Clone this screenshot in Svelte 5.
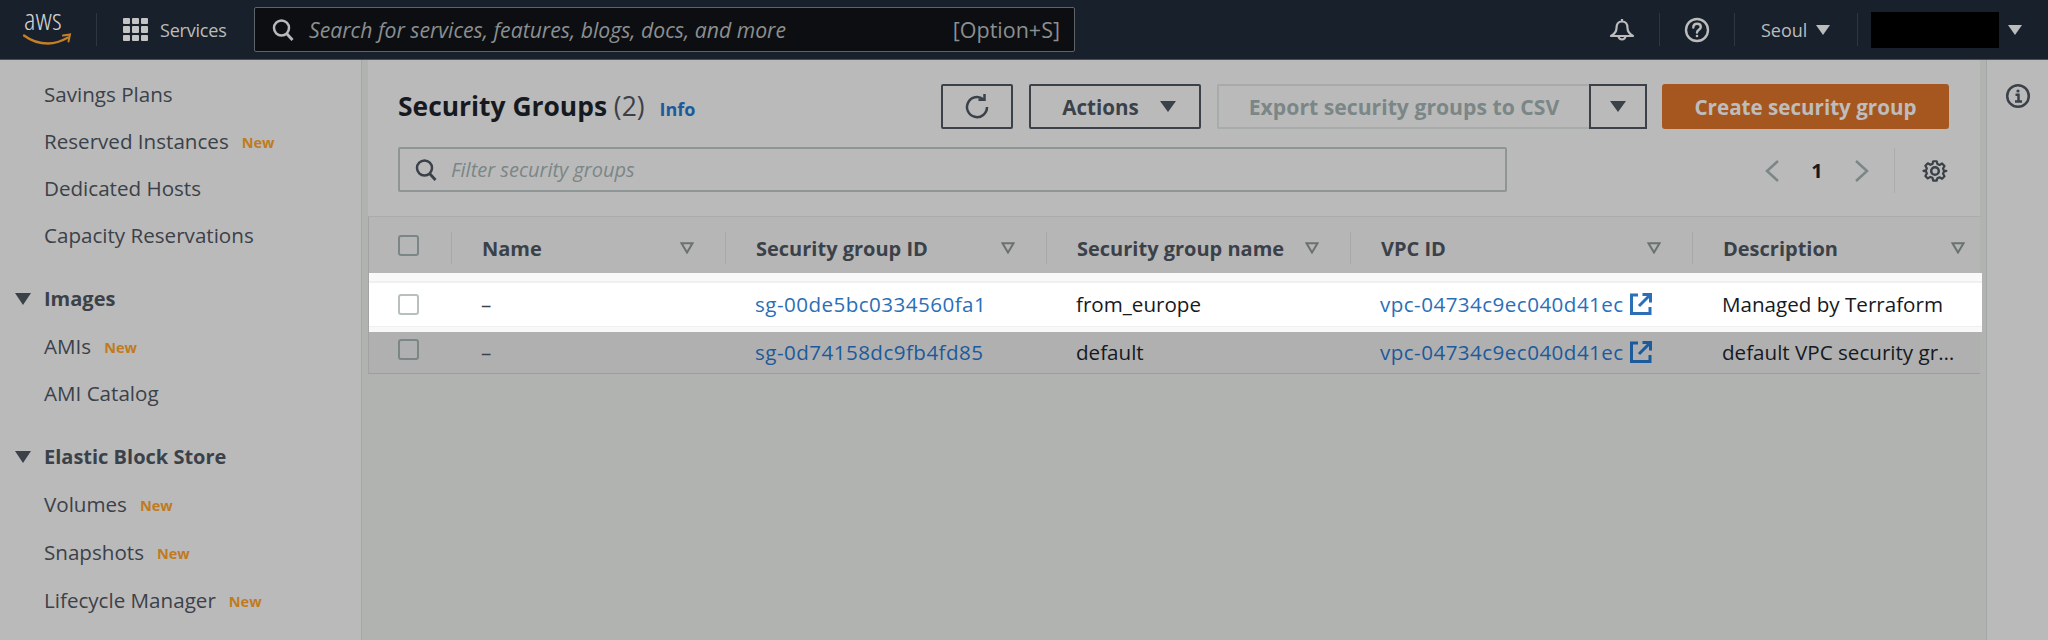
<script>
  const groups = [
    { items: [{ t: 'Savings Plans' }, { t: 'Reserved Instances', n: 1 }, { t: 'Dedicated Hosts' }, { t: 'Capacity Reservations' }] },
    { head: 'Images', items: [{ t: 'AMIs', n: 1 }, { t: 'AMI Catalog' }] },
    { head: 'Elastic Block Store', items: [{ t: 'Volumes', n: 1 }, { t: 'Snapshots', n: 1 }, { t: 'Lifecycle Manager', n: 1 }] }
  ];
  const cols = ['Name', 'Security group ID', 'Security group name', 'VPC ID', 'Description'];
  const rows = [
    { id: 'sg-00de5bc0334560fa1', name: 'from_europe', desc: 'Managed by Terraform', hi: true },
    { id: 'sg-0d74158dc9fb4fd85', name: 'default', desc: 'default VPC security group', hi: false }
  ];
</script>

<div class="page">
  <header class="top">
    <div class="logo">
      <span class="aws">aws</span>
      <svg class="smile" width="50" height="14" viewBox="0 0 50 14"><path d="M1 2.500C9 8.500 17 10.500 25 10.500c7 0 13-2 20-6" fill="none" stroke="#c67f24" stroke-width="2.400" stroke-linecap="round"/><path d="M40 2.500l7-1-1.500 7" fill="none" stroke="#c67f24" stroke-width="2" stroke-linecap="round"/></svg>
    </div>
    <span class="nsep s1"></span>
    <div class="dots">{#each Array(9) as _}<i></i>{/each}</div>
    <span class="services">Services</span>
    <div class="search">
      <svg width="22" height="24" viewBox="0 0 22 24"><circle cx="9.500" cy="10" r="7.500" fill="none" stroke="#b9b9b9" stroke-width="2.500"/><path d="M15 16l5.500 6" stroke="#b9b9b9" stroke-width="2.800"/></svg>
      <span class="ph">Search for services, features, blogs, docs, and more</span>
      <span class="kbd">[Option+S]</span>
    </div>
    <div class="right">
      <svg class="bell" width="26" height="26" viewBox="0 0 26 26" fill="none" stroke="#bcbcbc" stroke-width="2.200"><path d="M13 2v2.500M13 4.500c-4 0-5.500 3-5.500 6.500 0 4-2 6-5.500 8h22c-3.500-2-5.500-4-5.500-8 0-3.500-1.500-6.500-5.500-6.500z" stroke-linejoin="round"/><path d="M9.500 19a3.500 3.500 0 0 0 7 0"/></svg>
      <span class="nsep"></span>
      <svg class="help" width="26" height="26" viewBox="0 0 26 26" fill="none" stroke="#bcbcbc" stroke-width="2.400"><circle cx="13" cy="13" r="11"/><path d="M9.300 10.500c0-2.300 1.700-3.700 3.800-3.700s3.700 1.300 3.700 3.200c0 2.700-3.800 2.800-3.800 5.500" stroke-linecap="round"/><circle cx="13" cy="19" r="1.300" fill="#bcbcbc" stroke="none"/></svg>
      <span class="nsep"></span>
      <span class="seoul">Seoul</span>
      <span class="tri light t-seoul"></span>
      <span class="nsep"></span>
      <span class="black"></span>
      <span class="tri light t-user"></span>
    </div>
  </header>

  <div class="body">
    <aside class="side">
      {#each groups as g}
        <section class="group">
          {#if g.head}
            <div class="head"><span class="tri dark"></span><span>{g.head}</span></div>
          {/if}
          {#each g.items as it}
            <div class="item">{it.t}{#if it.n}<span class="new">New</span>{/if}</div>
          {/each}
        </section>
      {/each}
    </aside>

    <main class="main">
      <div class="panel">
        <div class="bar1">
          <h1>Security Groups <span class="count">(2)</span></h1>
          <span class="info">Info</span>
          <div class="actions">
            <button class="btn refresh" aria-label="Refresh">
              <svg width="26" height="26" viewBox="0 0 26 26" fill="none" stroke="#3b4149" stroke-width="2.500"><path d="M19.500 5.500A10 10 0 1 0 23 13"/><path d="M14.500 5.800h6V0"/></svg>
            </button>
            <button class="btn act">Actions<span class="tri dark big"></span></button>
            <div class="export">Export security groups to CSV</div>
            <button class="btn drop" aria-label="Export options"><span class="tri dark big"></span></button>
            <button class="create">Create security group</button>
          </div>
        </div>
        <div class="bar2">
          <div class="filter">
            <svg width="22" height="24" viewBox="0 0 22 24"><circle cx="9.500" cy="10" r="7.500" fill="none" stroke="#3b4149" stroke-width="2.500"/><path d="M15 16l5.500 6" stroke="#3b4149" stroke-width="2.800"/></svg>
            <span class="fph">Filter security groups</span>
          </div>
          <div class="pager">
            <svg width="16" height="24" viewBox="0 0 16 24" fill="none" stroke="#7b8686" stroke-width="2.500"><path d="M14 2L3 12l11 10"/></svg>
            <span class="pnum">1</span>
            <svg width="16" height="24" viewBox="0 0 16 24" fill="none" stroke="#7b8686" stroke-width="2.500"><path d="M2 2l11 10L2 22"/></svg>
            <span class="psep"></span>
            <svg width="26" height="26" viewBox="0 0 26 26" fill="none" stroke="#3b4149" stroke-width="2.500"><path d="M11 2h4l.8 3.200 2.400 1 2.900-1.700 2.800 2.800-1.700 2.900 1 2.400L26 13l-2.800.8-1 2.400 1.700 2.900-2.800 2.800-2.900-1.700-2.400 1L15 24h-4l-.8-3.200-2.400-1-2.900 1.700-2.800-2.800 1.700-2.900-1-2.400L0 13l2.800-.6 1-2.400-1.700-2.900 2.800-2.800 2.900 1.700 2.400-1z" transform="translate(1.500 1.500) scale(.88)" stroke-linejoin="round"/><circle cx="13" cy="13" r="3.800"/></svg>
          </div>
        </div>

        <div class="table">
          <div class="thead grid">
            <div class="cell cbc"><span class="cb"></span></div>
            {#each cols as c}
              <div class="cell th"><span>{c}</span>
                <svg class="sort" width="14" height="12" viewBox="0 0 14 12" fill="none" stroke="#69736f" stroke-width="2"><path d="M1.500 1.200h11L7 10.500z"/></svg>
              </div>
            {/each}
          </div>
          {#each rows as r}
            <div class="row grid" class:hi={r.hi}>
              <div class="cell cbc"><span class="cb"></span></div>
              <div class="cell td dash">–</div>
              <div class="cell td link">{r.id}</div>
              <div class="cell td">{r.name}</div>
              <div class="cell td link">vpc-04734c9ec040d41ec
                <svg class="ext" width="22" height="22" viewBox="0 0 22 22" fill="none" stroke="currentColor" stroke-width="3"><path d="M8 2H1.500v18.500H20V14"/><path d="M12.500 1.500h8v8M20 2L9 13"/></svg>
              </div>
              <div class="cell td desc"><span class="ell">{r.desc}</span></div>
            </div>
          {/each}
        </div>
      </div>
    </main>

    <aside class="tools">
      <svg width="26" height="26" viewBox="0 0 26 26" fill="none" stroke="#3b4149" stroke-width="2.500"><circle cx="13" cy="13" r="10.800"/><circle cx="13" cy="8" r="1.600" fill="#3b4149" stroke="none"/><path d="M10.500 11.800H13.500V18M10 18.500h7"/></svg>
    </aside>
  </div>
</div>

<style>
  :global(body) { margin: 0; background: #bababa; }
  .page {
    width: 2048px; height: 640px; overflow: hidden;
    font-family: "Open Sans", "Noto Sans", sans-serif;
    display: flex; flex-direction: column;
    color: #3b4149; background: #bababa;
  }
  .top {
    height: 59px; flex: none; display: flex; align-items: center;
    background: #18202b; border-bottom: 1px solid #4a4f55; color: #bcbcbc;
  }
  .logo { width: 52px; margin-left: 24px; height: 46px; position: relative; }
  .aws { position: absolute; left: 0; top: 0; font-size: 30px; line-height: 24px; font-stretch: 85%; font-weight: 300; color: #cfcfcf; white-space: nowrap; }
  .smile { position: absolute; left: -1px; top: 26px; }
  .nsep { width: 1px; height: 33px; background: #2e3640; flex: none; }
  .s1 { margin-left: 20px; }
  .dots { display: grid; grid-template-columns: repeat(3, 7px); gap: 2px; margin-left: 26px; }
  .dots i { width: 7px; height: 6.500px; background: #c4c4c4; border-radius: 1px; }
  .services { margin-left: 12px; font-size: 18px; width: 69px; white-space: nowrap; letter-spacing: -.2px; }
  .search {
    margin-left: 25px; height: 43px; flex: none;
    background: #0c0e12; border: 1px solid #5e6468; border-radius: 2px;
    display: flex; align-items: center; padding: 0 14px 0 17px; box-sizing: content-box; width: 788px;
  }
  .ph { margin-left: 15px; font-style: italic; font-size: 21.200px; color: #8b8f90; white-space: nowrap; }
  .kbd { margin-left: auto; font-size: 21.500px; color: #8b8f90; }
  .right { margin-left: auto; display: flex; align-items: center; }
  .bell { margin-right: 24px; }
  .help { margin: 0 24px; }
  .seoul { margin-left: 26px; font-size: 18px; width: 47px; }
  .tri { display: inline-block; width: 0; height: 0; border-style: solid; border-color: transparent; border-width: 10px 7px 0; }
  .tri.light { border-top-color: #bcbcbc; }
  .tri.dark { border-top-color: #3b4149; }
  .tri.big { border-width: 11px 8px 0; }
  .t-seoul { margin: 0 27px 0 8px; }
  .black { width: 128px; height: 36px; background: #000; margin-left: 13px; }
  .t-user { margin: 0 26px 0 9px; }

  .body { flex: 1; min-height: 0; display: flex; }
  .side { width: 362px; flex: none; box-sizing: border-box; padding-top: 10px; border-right: 1px solid #a5a7a6; }
  .group + .group { margin-top: 17px; }
  .head, .item { height: 47px; display: flex; align-items: center; white-space: nowrap; }
  .group:last-child .item { height: 48px; }
  .item { padding-left: 44px; font-size: 20.600px; }
  .head { font-weight: 700; font-size: 20px; }
  .head .tri { width: 0; margin: 0 13px 0 15px; border-width: 12px 8px 0; }
  .new { font-size: 14.500px; font-weight: 700; color: #c17a20; margin-left: 13px; margin-top: 3px; }

  .main { width: 1625px; flex: none; box-sizing: border-box; display: flex; background: #b1b3b1; border-right: 1px solid #a5a7a6; }
  .panel { width: 1612px; margin-left: 6px; flex: none; }
  .bar1 { height: 87px; padding: 24px 31px 0 30px; box-sizing: border-box; display: flex; align-items: flex-start; background: #bababa; }
  h1 { margin: 0; font-size: 26.400px; line-height: 45px; font-weight: 700; color: #16191f; white-space: nowrap; }
  .count { font-weight: 400; color: #3b4149; }
  .info { margin-left: 15px; font-size: 18px; font-weight: 700; color: #1c5a9c; line-height: 50px; }
  .actions { margin-left: auto; display: flex; }
  .btn { height: 45px; box-sizing: border-box; background: transparent; border: 2px solid #3b4149; border-radius: 2px; display: flex; align-items: center; justify-content: center; font: inherit; font-weight: 700; font-size: 20.600px; color: #3b4149; padding: 0; }
  .refresh { width: 72px; }
  .act { width: 172px; margin-left: 16px; gap: 21px; padding-left: 8px; }
  .export { width: 372px; height: 45px; margin-left: 16px; box-sizing: border-box; border: 2px solid #a7acab; border-right: 0; border-radius: 2px 0 0 2px; font-weight: 700; font-size: 21.200px; color: #7b8686; display: flex; align-items: center; justify-content: center; white-space: nowrap; }
  .drop { width: 58px; border-radius: 0; }
  .create { width: 287px; height: 45px; margin-left: 15px; border: 0; border-radius: 3px; background: #a65720; color: #bdbdbd; font: inherit; font-weight: 700; font-size: 20.600px; }
  .bar2 { height: 69px; padding-left: 30px; padding-right: 32px; display: flex; background: #bababa; box-sizing: border-box; }
  .filter { width: 1109px; height: 45px; box-sizing: border-box; border: 2px solid #8d9695; border-radius: 2px; display: flex; align-items: center; padding-left: 15px; flex: none; }
  .fph { margin-left: 14px; font-style: italic; font-size: 20px; color: #7b8686; }
  .pager { margin-left: auto; display: flex; align-items: center; height: 45px; margin-top: 1px; }
  .pnum { width: 78px; margin: 0 -2px; text-align: center; font-weight: 700; font-size: 20px; color: #16191f; }
  .psep { width: 1px; height: 45px; background: #a9adac; margin: 0 27px 0 24px; }
  .table { background: #b6b6b6; border-top: 1px solid #a9acab; border-bottom: 1px solid #9b9e9d; border-left: 1px solid #a0a3a2; }
  .grid { display: grid; grid-template-columns: 82px 274px 321px 304px 342px 288px; }
  .thead { height: 56px; align-items: center; background: #b6b6b6; }
  .cell { display: flex; align-items: center; box-sizing: border-box; min-width: 0; }
  .cbc { padding-left: 29px; }
  .cb { width: 21px; height: 21px; box-sizing: border-box; border: 2px solid #7b8686; border-radius: 3px; }
  .th { height: 32px; border-left: 1px solid #a6a9a8; padding-left: 30px; padding-right: 31px; font-size: 20px; font-weight: 700; justify-content: space-between; white-space: nowrap; margin-top: 6px; }
  .th:last-child { padding-right: 15px; }
  .row { height: 41px; align-items: center; background: #b0b0b0; color: #16191f; font-size: 20.600px; }
  .row .cb { margin-top: -6px; }
  .td { padding-left: 30px; white-space: nowrap; margin-top: -2px; }
  .hi { height: 59px; background: #fff; border-top: 8px solid #f9f9f9; border-bottom: 5px solid #f8f8f8; box-sizing: border-box; box-shadow: inset 0 2px #f0f0f0, inset 0 -1px #f0f0f0; margin-right: -2px; }
  .hi .td { margin-top: 0; }
  .hi .cb { border-color: #b8bfbf; background: #fff; margin-top: 0; }
  .link { color: #1c5a9c; letter-spacing: .45px; }
  .hi .link { color: #2a6fb7; }
  .dash { color: #3b4149; }
  .ext { margin-left: 6px; }
  .desc { padding-right: 14px; }
  .ell { overflow: hidden; text-overflow: ellipsis; }
  .tools { flex: 1; display: flex; justify-content: center; padding-top: 23px; align-items: flex-start; }
</style>
